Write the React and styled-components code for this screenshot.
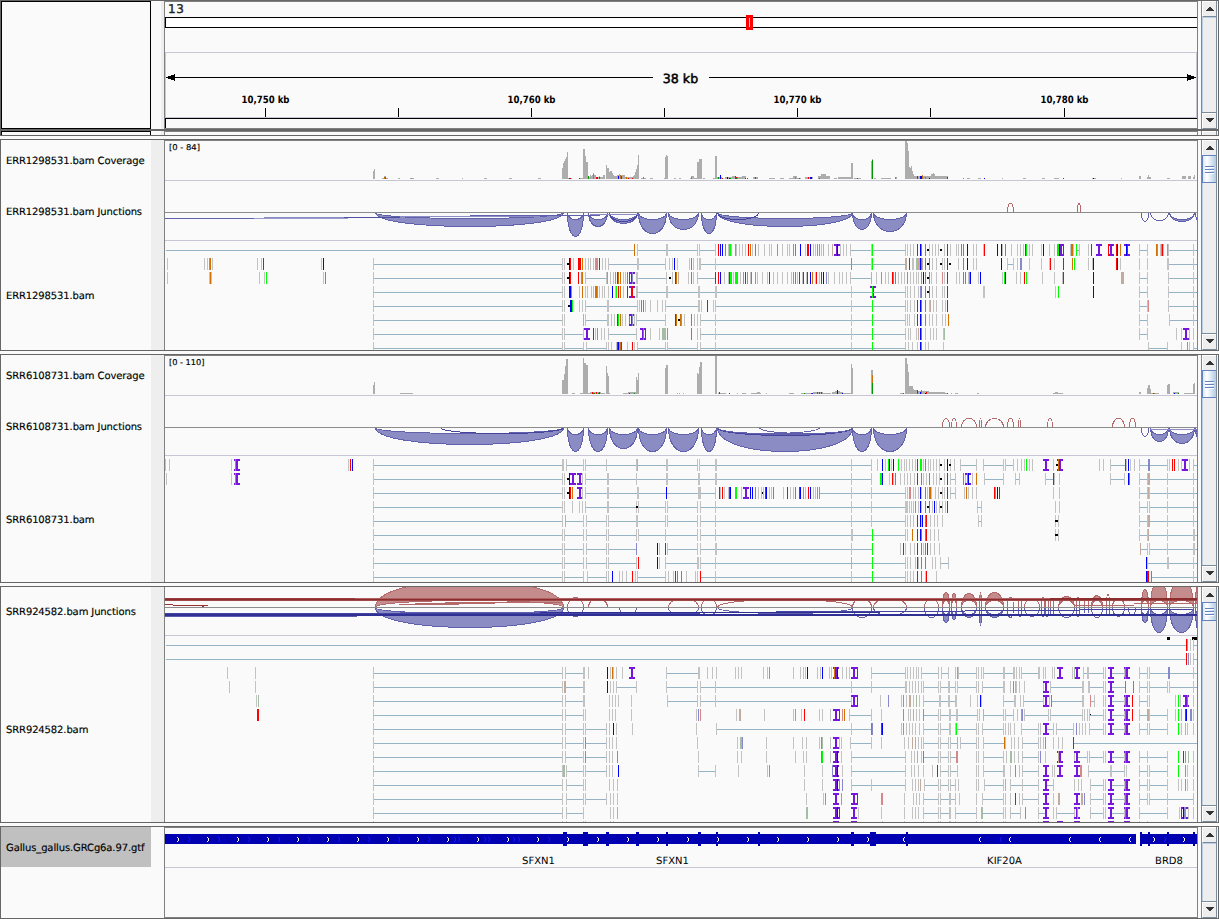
import React from 'react';
import styled, { createGlobalStyle } from 'styled-components';

const Global = createGlobalStyle`
  * { box-sizing: border-box; }
  html, body { margin: 0; padding: 0; background: #fafafa; overflow: hidden; }
  body { font-family: "DejaVu Sans", Verdana, sans-serif; font-size: 10px; color: #000; }
`;

const Window = styled.main`
  display: flex;
  flex-direction: column;
  width: 1219px;
  height: 919px;
  background: #fafafa;
`;

const HeaderPanel = styled.section`
  display: flex;
  height: 131px;
  border: 1px solid #666;
  border-bottom-width: 2px;
`;

const Stub = styled.div`
  display: flex;
  height: 5px;
  margin-bottom: 3px;
  border: 1px solid #666;
  border-top: 0;
`;

const Panel = styled.section`
  display: flex;
  height: ${(p) => p.$h}px;
  border: 1px solid #666;
  & + & { margin-top: 3px; }
`;

const Names = styled.div`
  display: flex;
  flex-direction: column;
  width: 150px;
  flex: none;
`;

const HeaderBox = styled.div`
  width: 150px;
  flex: none;
  border: 1px solid #000;
  ${(p) => p.$open && 'border-bottom: 0;'}
`;

const TrackName = styled.div`
  display: flex;
  align-items: center;
  height: ${(p) => p.$h}px;
  padding: 2px 0 0 5px;
  white-space: nowrap;
  letter-spacing: -0.12px;
  text-rendering: geometricPrecision;
  -webkit-text-stroke: 0.15px #000;
  background: ${(p) => (p.$selected ? '#c0c0c0' : 'transparent')};
`;

const Strip = styled.div`
  width: 13px;
  flex: none;
  border-left: ${(p) => (p.$narrow ? '10px solid #fafafa' : '0')};
  background: ${(p) => (p.$plain ? '#fafafa' : '#eee')};
`;

const Data = styled.div`
  display: flex;
  flex-direction: column;
  width: 1034px;
  flex: none;
  overflow: hidden;
  border: solid #808080;
  border-width: ${(p) => (p.$top ? 1 : 0)}px 1px ${(p) => (p.$bottom ? 1 : 0)}px 1px;
`;

const Canvas = styled.svg`
  display: block;
  flex: none;
  width: 1032px;
  height: ${(p) => p.$h}px;
  shape-rendering: crispEdges;
  text-rendering: geometricPrecision;
  font-family: "DejaVu Sans", Verdana, sans-serif;
`;

const Divider = styled.div`
  height: 1px;
  flex: none;
  background: #c6c6d4;
`;

const Scroll = styled.div`
  display: flex;
  flex-direction: column;
  width: 16px;
  flex: none;
  margin-left: 3px;
  border-left: 1px solid #7a8a99;
  border-right: 1px solid #7a8a99;
  background: #eee;
  overflow: hidden;
`;

const ScrollButton = styled.div`
  display: flex;
  align-items: center;
  justify-content: center;
  height: 16px;
  flex: none;
  padding-bottom: ${(p) => (p.$down ? 2 : 0)}px;
  border: 1px solid #fff;
  border-right: 0;
  border-bottom: 1px solid #7a8a99;
  box-shadow: ${(p) => (p.$down ? '0 -1px 0 #7a8a99' : 'none')};
  background: #eee;
`;

const ScrollTrack = styled.div`
  flex: 1;
  border-left: 1px solid #b8cfe5;
  border-top: ${(p) => (p.$bare ? '1px solid #b8cfe5' : '0')};
`;

const Thumb = styled.div`
  display: flex;
  flex-direction: column;
  justify-content: center;
  gap: 1px;
  height: ${(p) => p.$h}px;
  margin: -1px 0 0 -1px;
  padding: 1px 2px 0;
  border: 1px solid #6382bf;
  border-right: 0;
  background: linear-gradient(to right, #d9e6f3, #fff 30%, #b8cfe5 95%);
`;

const Grip = styled.i`
  height: 2px;
  border-top: 1px solid #6382bf;
  background: #fff;
`;

const COLORS = {
  '': '#c3c3c3',
  r: '#ff0000',
  b: '#0000ff',
  g: '#00ff00',
  o: '#d17105',
  l: '#d68888',
  v: '#8888cc',
  t: '#c2ab9c',
  s: '#a4bda4',
  G: '#009600',
};

/* Reads are positioned in thirds of a pixel from the last "@origin"; "-" joins two reads. */
function Reads({ rows, top }) {
  const out = [];
  rows.forEach((row, r) => {
    const y = top + r * 14;
    let origin = 0;
    let prev = null;
    let join = false;
    row.split(/\s+/).forEach((tok, i) => {
      const key = r + '-' + i;
      if (tok[0] === '@') { origin = Number(tok.slice(1)); return; }
      if (tok === '-') { join = true; return; }
      const m = /^([a-zA-Z]?)(\d+)(?:x(\d))?$/.exec(tok);
      if (!m) return;
      const x = Math.floor(origin + Number(m[2]) / 3);
      const w = Number(m[3] || 1);
      if (join && prev !== null) {
        out.push(<rect key={'j' + key} x={prev} y={y + 6} width={Math.max(0, x - prev)} height="1" fill="#94b4c6" />);
      }
      join = false;
      prev = x + w;
      if (m[1] === 'E') return;
      if (m[1] === 'I') {
        const c = Math.round(origin + Number(m[2]) / 3);
        out.push(<path key={key} fill="#7616dc" d={`M${c - 3} ${y}h6v2h-2v8h2v2h-6v-2h2v-8h-2z`} />);
      } else if (m[1] === 'k') {
        out.push(<rect key={key} x={x - 1} y={y + 5} width={w + 1} height="2" fill="#000" />);
      } else {
        out.push(<rect key={key} x={x} y={y} width={w} height="12" fill={COLORS[m[1]]} />);
      }
    });
  });
  return <g>{out}</g>;
}

function Coverage({ data, base }) {
  return (
    <g>
      {data.trim().split(/\s+/).map((tok, i) => {
        const m = /^([a-zA-Z]?)(\d+)(?:-(\d+))?:(\d+)$/.exec(tok);
        const x = Number(m[2]);
        const end = Number(m[3] || x);
        const h = Number(m[4]);
        return <rect key={i} x={x} y={base - h} width={end - x + 1} height={h} fill={m[1] ? COLORS[m[1]] : '#adadad'} />;
      })}
    </g>
  );
}

/* [start, end, inner depth, outer depth]; a missing outer depth gives a thin arc. */
function Arcs({ list, base, up }) {
  const s = up ? -1 : 1;
  const stroke = up ? '#b46a6a' : '#6060ac';
  const fill = up ? '#c48c8c' : '#8c8cc4';
  return (
    <g strokeWidth="1">
      {list.map(([a, b, inner, outer, dark], i) => {
        const y = base + 0.5;
        const c1 = y + (s * inner) / 0.75;
        const x1 = a + 0.5;
        const x2 = b + 0.5;
        if (!outer) {
          return <path key={i} fill="none" stroke={dark || stroke} d={`M${x1} ${y}C${x1} ${c1} ${x2} ${c1} ${x2} ${y}`} />;
        }
        const c2 = y + (s * outer) / 0.75;
        return <path key={i} fill={fill} stroke={stroke} d={`M${x1} ${y}C${x1} ${c1} ${x2} ${c1} ${x2} ${y}C${x2} ${c2} ${x1} ${c2} ${x1} ${y}z`} />;
      })}
    </g>
  );
}

function Bars({ list }) {
  return list.map(([x, y, w, h, c], i) => <rect key={i} x={x} y={y} width={w} height={h} fill={c} />);
}

function Arrow({ down }) {
  return (
    <svg width="8" height="4" viewBox="0 0 8 4" shapeRendering="crispEdges">
      <path fill="#333" d={down ? 'M0 0h8v1h-1v1h-1v1h-1v1h-2v-1h-1v-1h-1v-1h-1z' : 'M3 0h2v1h1v1h1v1h1v1h-8v-1h1v-1h1v-1h1z'} />
    </svg>
  );
}

function ScrollBar({ thumb }) {
  return (
    <Scroll>
      <ScrollButton><Arrow /></ScrollButton>
      <ScrollTrack $bare={!thumb}>
        {thumb && <Thumb $h={thumb}><Grip /><Grip /><Grip /></Thumb>}
      </ScrollTrack>
      <ScrollButton $down><Arrow down /></ScrollButton>
    </Scroll>
  );
}

function Track({ top, h, children }) {
  return <Canvas $h={h} viewBox={`165 ${top} 1032 ${h}`}>{children}</Canvas>;
}

const COV1 = `
373:8 374:10 382-387:1 384-385:3 o384:2 G385:2 398-399:1 410-413:1 o411:1 436-438:1 462:1 484-486:1 509-511:1 538-540:1
562:11 563:16 564:18 565:20 566:22 567:27 568-571:1 b569:1 r570:1 r579:1 580-582:1
583-584:30 585:23 586-587:17 588-604:2 590:4 591:3 592:4 593:6 594-595:4 599:3 603-604:4 G588:3 o593:5 r597:2 G599:2 r596:2
606:14 607-608:11 609:7 610-611:8 612:6 613:4 614-616:3 617-624:4 619:5 625-632:2 b618:3 o620:4 r621:3 o626:2 r628:1 r632:1
633:3 634:4 635:7 636:10 637:14 638:24 641-645:1 643:2 o643:2 650-652:1 664:1 665:22 666:24 667:23 674-675:1 679-680:1
690-696:1 691-693:3 o691:2 697-698:17 699-701:20 703-704:1 713-714:1 715-716:23 717-721:2 720:4 G718:2 b720:4 r722:1
725-741:2 732-735:3 b727:2 b729:1 G730:1 r735:3 r736:2 o737:2 G736:1 742-745:3 r745:1 G747:1 753-757:2 G755:2 769-774:1 780-783:1
789-800:1 793-796:3 o795:2 r799:1 805-812:2 r808:2 b810:2 b811:2 818-829:3 821-825:5 G819:1 834-836:1 838-850:2 
851-852:16 854-860:1 G857:1 871:18 872:20 G872:19 874-875:1 881-890:1 o895:2 896:2
905-906:38 907:36 908:28 909:12 910:11 911:13 912:8 913:5 914-926:3 927-947:3 931-934:5 933:6 922:4 r917:3 b920:3 b921:3 o922:4 o925:2 b929:1 r947:2
o963:1 967-969:1 978-980:1 b984:1 1002:1 1023-1025:1 1042-1044:1 1054-1058:1 r1063:1 1092-1095:1 b1093:1 1121:1
1139-1140:3 1147-1150:2 1148:4 1167-1169:1 1182-1185:3 1188-1190:3 1193:2 1194:4`;

const COV2 = `
373:9 374:12 400-412:1 562-563:14 564:20 565:28 566-567:35 572-574:1 580-582:1 583:36 584-585:31 586-587:29
588-604:1 590-600:2 r592:2 r593:1 r596:2 G594:1 G598:1 r599:2 606:28 607:21 608:18 609:1 623-627:1 628-635:2 r629:1 G634:1
636:17 637:14 638:21 665:26 666-667:29 677:1 679:1 683:1 697:21 698:20 699:27 700-701:32 715-716:38 718-725:1 r719:2
r729:1 737:1 742-745:1 751-760:1 757-759:2 766:1 789-793:1 801-812:1 G804:1 G811:1 b812:1 813-822:2 G817:2 G819:2 r821:2 823-830:1
832-842:2 835-839:3 b837:4 b842:1 843-850:1 851:30 852:26 871-872:24 o872:19 G872:11
900-903:1 G903:1 905-906:36 907:30 908:22 909-912:8 913:5 914-916:4 918-922:3 923-928:3 r917:4 o921:4 b920:2 r926:2 b925:1 929-944:2 945-947:1 r947:1
951:1 955-957:1 977-978:1 1053-1062:1 1055-1057:2 1139-1140:2 1147:6 1148-1149:9 1150:5 1151-1158:1 r1153:1 o1154:1
1167:9 1168-1169:10 1173-1178:2 b1174:1 G1178:1 1184-1192:1 1193:10 1194:11`;

const ROWS1 = [
  '@0 E495 - @540 o283 292 - 378 382 - 473 478 - 526 r535 b541 b547 o556 565 g568x2 574 g586 r589 590 598 606 r616 615 r625 o631 638 o646 655 673 688 695 g712 728 743 749 g760 o766 b781 796 r803x2 b811 820 826 g832 g838 844 s851 866 t877 I890 b892 902 910 919 931 - 993 g997 - 1095 @880 76 82 91 100 r112 b121 o124 o136 k144 148 157 166 175 k185 193 r202 211 230 236 o244 o250 b262 281 290 310 r313 b352 b364 367 o376 394 412 421 430 r436 g439 448 457 484 b490 508 523 I544 v532 g535 b538 r550 571 o574x2 580 g589 - 598 625 r634 I656 I693 r686 r710 b712 o720 I741 b738 778 - 803 o829 g832 841 g843 r846 850 l862 865 - 940 - E951',
  '@0 502 613 622 g628 o631 637 772 784 r790 964 b970 1120 - @540 68 73 k84 b88 r91 100 r115x3 o127 136 145 151 160 l167x3 r178 187 196 205 - 291 295 - 376 388 397 b403 412 448 o454 460 472 479x2 - 526 - v934 - 994 g997 - 1095 @880 t76x2 r88 97 100 s108x4 t115x2 b121 o124 t127 o136 k146 o148 157 169 k185 187 193 r202 k212 236 o250 b262 281 290 b364 382 - 400 412 v421x2 448 484 r511 508 523 r550 o577 g583 625 b640 637 r710 b712 720 778 803 862x2 - 940 - E951',
  '@0 502 628 o631 634 778 794 g799 970 o976 1120 - @540 68 73 k84 b88 r91 r115 g124 o127 136 - 199 l202 211 220 g226 r232 o235 o241 250 256 o262 r268 I277 v277 289 292 - 378 k390 397 r406 o409 t414 445 o454 460 472 - r526 r535 b541 553 565 r568 g571x2 580 g586x3 601 g610 r616 g622 631 o634 g646 652 667 682 r688 700 712 727 742 754 g760 o766 772 r778 787 r790 799 r803 b811 o817 826 r829 838 r844 b850 v859 865 883 898 907 919 931 - s995 1009 @880 g4 16 25 r37 o40 o46 55 64 73 v82 91 100 109 115 v124 b131 o136 k144 o148 154 169 l187 193 r202 230 239 o250 o256 265 v269 b272 295 b301 367 g373 b376 409 421 r433 g439 487 523 547 r550 b640 t725x3 778 - 803 865 - 940 - E951',
  '@0 1120 - @540 68 73 b88x2 g94 118 o127 136 142 154 160 o166x2 g173 178 187 193 205 b217 226 g229 o241 r234 250 r262 I277 r277 289 292 - 378x2 - 474x2 - 527x2 - 934 - I998 g998 - 1095 @880 76 82 91 103 115 v121x2 o124 o136 148 k146 o148 157 169 187 193 r202 310x2 526 g535 b640 778 - 803 865 - 940 - E951',
  '@0 1120 - @540 68 73 k88 b91x2 g96 118 127 136 - 201x2 - 291 298 o304 o310 316 331 352 367 376 - 474x2 484 r502 520 526 - 934 - g997 - 1095 @880 76 82 91 103 r112 b121 o124 o136 148 t151 160 169 187 196 r202 778 - 803 l805 865 - 940 - E951',
  '@0 1120 - @540 68 73 t129 136 - 201x2 214 223 r232 g236 o241 247 256 o268 I277 v277 283 289 - 376 r406 o409 k418 o421 g424 433 o454 463 472 481 - 526 - 934 - g997 - 1095 @880 76 82 88 103 r112 b121 o124 o136 148 157 169 187 196 o205 778 - 803 868 - 940 - E951',
  '@0 1120 - @540 68 73 - 130 I140 r160 166 g172 184 193 205 - 289 I308 o310 r316 331 358 s368x4 g382 o454 472 481 - 526 - 934 - g997 - 1095 @880 76 85 91 109 t115 b121 o124 136 151 160 169 190 s193 778 - 803 889 904 I917 928 940',
  '@0 1120 - @540 68 73 - 130 139 - 199 205 214 229 r232 b235 g238 o241 r244 262 r277 283 292 - 376 382 - 472 481 - 526 - 934 - g997 - 1095 @880 76 85 97 112 b121 o124 136 145 190 805 - 862 904 g922 928 940 - E951',
];

const ROWS2 = [
  '@150 46 58 244 I261 v256 595 r601 b607 670 - @540 68x2 79 - 130 136 - 199 - 290 t292 - 378x2 - 472 478 - 527x2 - 934 - 994 1012 @880 b7 17 g25 b28 b40 34 g55 64 73 79 88 97 106 r112 g121x2 130 o136 145 151 160 169 178 k184 193 b202 211 k212 223 241 - 290 311 - 370 376 - 400 412 424 433 g439 448 457 I497 520 I541 k533 o535 658 670 691 - r736 739 b745 751 763 778 - v805x2 - 862 868 r877 r883 895 904 I916 928 940 - E951',
  '@150 49 244 I261 v256 670 - @540 68 73 k84 b88 I99 I119 127 136 - 201x2 - 290 - 378x2 - 474x2 - 527x2 - 934 - 994 @880 g1x2 b7 28 r37 40 o46 61 73 82 91 103 r112 o124 130 139 o148 160 169 178 k184 193 r202 211 - 226 o250 256 I264 o262 b265 277 o289 313 - 370 406 - 418 497 - r520 523 538 691 - 733 b745 o748 778 - 803 t805x2 - 862 - 940 - E951',
  '@150 670 - @540 68 73 k84 b88 r91 o97 I119 127 136 - 201x2 - 292x2 - b379 - 474x2 481 - 526 r538 r547 541 553 565 r568 b571 g586x2 604 I619 b631 b637 o646 655 664 k671 670 r676 b679 688 694 o700 730 r742 751 760 o766 b781 r778 g790 796 r805 b811 820 826 g832 g838 - 934 - 994 - 1095 @880 76 82 l88x2 100 106 115 b121x2 124 o136 142 o148x2 154 166 175 k184 187 193 r202 211 - 226 253 o259 265 277 289 r343 g346 b352 r358 520 538 778 - 803 t805 808 - 862 - 940 - E951',
  '@150 670 - @540 68 73 97 118 127 136 - 201x2 - 290 k292 295 - 376 382 - 472 481 - 526 - 934 - 994 - 1095 @880 79x2 88 94 100 g106 115 b121 124 o136 k145 o148 157 b163 169 178 k185 187 196 r202 292 - 304 526 538 778 - 803 808 - 862 - 940 - E951',
  '@150 670 - @540 68 s76 - 130 139 - 199 205 - 290x2 - 376 382 - 472 481 - 526 - 934 - 994 - 1095 @880 76 82 91 100 r112 b121 124 b127 o136 r139 151 163 172 187 295 - 304 526 k529x3 535 778 - 803 t805x2 - 862 - 940 - E951',
  '@150 670 - @540 68 73 - 130 139 - 199 205 - 290 295 - 376 - 472 481 - 526 - 934x2 - g997 - 1095 @880 76 82 o97 r112 b121 o124 o136 r139 151 163 175 526 k529x3 535 778 - 803 t805 - 862 - 940x2 - E951',
  '@150 670 - @540 68 73 - 130 139 - 199 205 - v290 b352 358 r376 382 - 472 481 - 527x2 - 934 - g997 @880 61 r70 76 91 103 r112 o124 130 o136 r142 151 163 178 t781 - 803 808 - 862 - 940x2 - E951',
  '@150 670 - @540 68 73 - 130 139 - 199 205 - 290 r295 b352 358 376 - 472x2 481 - 526 - t934 - g997 - 1095 @880 76 82 91 r112 106 o124 115 o136 157 166 181 - 205 b799 802 - 862x2 - 940 - E951',
  '@150 670 - @540 68 73 - 130 141 - 199 205 b217 238 247 259 r277 286 292 - 376 385 400 r406 o412 o424 439 466 472 r481 - 526 - 934 - g997 - 1095 @880 76 82 91 100 r112 o124 136 r139 169 b799 r803x2 o814 - 940 - E951',
];

const ROWS3 = [
  '@165 E0 - @880 r919 l922 931 940 - E951',
  '@165 E0 - @880 r919 v924 931 940 - E951',
  '@140 262 346 700 - @540 68 76 - 130 133 145 b202 211 o217 220 229 247 I276 379 - 474x2 502 517 529 586 595 604 670 682 g688 760 781 790 796 b802 832 841 b847 868 874 I889 o883 b892 907 919 928 I942 r952 994 - @880 76 82 91 100 109 115 124 - 175 184 - 205 226 l232 235 - 289 295 304 310 - 370x2 - 400 403 409 418 424 - 475x2 490 496 517 523 I540 577 I591 s583 610 - 622x2 - 670 676 I693 - 733 I741 o736 778 - 803 808 - v865x2 - 940 - E951',
  '@140 268 346 700 - @540 68 t73x2 - 130 133 b202 211 220 229 - 289 379 - 472 481 - 526 - 934 - 994 - @880 76x2 88 97 106 115 124 130 - 175 181 - 205 208 - 226 232 - 289 295 307 - 370x2 391 v400 s406 409 418 433 490 I499 511 - 608x2 625 628 - 670 676 I693 - o736 o760 778 - 803 808 - 862 868 - 940 - E951',
  '@140 349 s355 700 - @540 68 76 - 130 133 208 217 226 235 274 382 - 472 481 - 526 - 934 I942 r952 1021 v1045 @880 64 g70 79 t88x2 100 s109 118 130 - 178x2 - 205 208 - 227x2 271 292 b301 304 370 - 403x2 421 430 - 490 I498 508 o514 - 608x2 l631 - 643 670 676 I693 - 733 I741 o736 r757 778 - 803 808 886 g895 901 I917 o922 940',
  '@140 r352x2 700 - @540 68 76 - 130 136 208 217 226 274 469 v475 l481 589 t598x2 673 760 l766 784 r793 838 847 871 I888 r898 l907 o913 928 - 994 1024 @880 4 g70 85 91 t100 109 118 g130 - 175 181 - 208x2 - 229x2 - 292 298 s310 - 370 376 - 400 412 l424 v427 433 - 505 511 - 606 613 622 k632 628 - 670 676 I693 - 733 I741 o736 r757 778 - t803x2 808 - 862 886 g895 t904 r916 b919 v931x2 940',
  '@140 700 - @540 68 76 - 130 136 - 199 208 b220 229 277 469 529 - 934 - o994 v997 r1024 b1027 @880 64 g70 79 88 97 106 118 130 - 175 181 - 208x2 226 g229 - 289 295 307 - 370 376 385 391 403 424 - 475 481 I498 - 520 529 - 580 v589 598 607 616 628 - 670 676 I693 - 733 I741 o736 778 - 803 808 - 862 g895 904 s916 922 940',
  '@140 700 - @540 68 76 - 130 v136 - 199 208 217 229 472 592 s601x2 v607 679 760 787 799 838 v844 s847 871 I888 898 904 931 - 994 1024 @880 4 73 85 t97 t106 115 124 130 - 175 181 - 205 211 - t232 241 - 289 295 310 - o373 376 394 403 415 427 - 475 481 490 v496 520 535 547 r580 - E951',
  '@140 700 - @540 68 76 - 130 v136 - 199 208 217 v232 475 592 604 679 766 790 799 o844 g847 871 I889 b892 904 934 - @880 76 94 103 t112 124 o129 - 175 181 - 205 211 - l229x2 289 295 310 - 370 379 s391x2 403 415 427 - 475 v481 496 I540 t535 583 I591 - 622 628 - 670 676 I693 - 733 I742 o736 778 - 803 - 862 g895 r910 g916 s925 940',
  '@140 700 - @540 68 s71x2 79 - 130 136 - 199 208 217 b235 475 - 526 595 682 g688 793 847 v877 I888 b892 907 934 - @880 76 94 103 115 130 157 r172 181 - 205 211 - 232 289 295 310 - 370x2 391 v406 418 427 - 475 I498 517 523 I540 I591 l601x2 625 - 690x2 - 733 739 778 - 803 808 - 862 g895 g916 922 940',
  '@140 700 - @540 68 79 - 130 136 208 220 232 793 847 I888 b892 v898 v907 934 - 994 - @880 76 97 106 115 t121 133 - 175 181 - 205 211 - 226 235 289 295 313 - 370 t376 391 - 427 - 475 I498 - 520 583 595 604 631 - 670 676 I693 - 733 I741 o736 778 - 803 808 - 862 895 904 g916 922 940',
  '@140 700 - @540 68 79 - 130 136 - 199 211 220 232 799 850 g856 I889 l904 I942 r952 l1025x2 @880 73 100 109 118 130 - 175 181 - 208x2 - 226 238 289 307 - 370 376 391 r406 418 427 - 475 I498 520 t535x2 I591 t605x2 v613 631 - 670 676 I693 - 733 I741 o736 778 - 803 808 - 862 - 940',
  '@140 700 - @540 68 79 - 130 211 220 t232 s800x2 I889 b892 r898 I942 955 1024 @880 73 97 106 115 130 - 175 181 - 208x2 226 - 289 s305x2 - 370 376 391 - 421 v436 475 - I498 520 529 - 583 I591 g592 631 - 670 676 I693 - 733 I741 o736 778 - 862 898 r904 I915 b911 v913 g916 925 940',
  '@140 700 @540 68 79 130 136 211 220 I889 I942 1027 @880 73 130 175 181 208x2 226 289 307 370 376 475 I498 I540 I591 I693 I741 778 803',
];

const DARK_BLUE = '#44449c';
const DOWN1 = [
  [375, 563, 6, 14], [567, 583, 7, 24], [588, 607, 7, 14], [609, 637, 7, 11], [609, 637, 9, 0, DARK_BLUE], [638, 666, 7, 21],
  [668, 698, 7, 17], [701, 716, 7, 21], [717, 852, 6, 14], [717, 758, 7, 0, DARK_BLUE], [852, 871, 7, 17], [873, 906, 7, 19],
  [1141, 1148, 9], [1150, 1168, 8], [1169, 1194, 7, 9], [1195, 1204, 9],
];
const DOWN2 = [
  [375, 563, 6, 17], [440, 563, 6, 0, DARK_BLUE], [567, 583, 7, 24], [588, 607, 7, 24], [609, 637, 7, 21], [638, 666, 7, 24],
  [668, 698, 7, 24], [701, 716, 7, 24], [717, 852, 7, 24], [717, 852, 8, 0, DARK_BLUE], [717, 819, 6], [759, 852, 6], [852, 871, 7, 24], [873, 906, 7, 24],
  [1141, 1148, 9], [1150, 1168, 7, 14], [1169, 1194, 7, 16], [1195, 1206, 7, 14],
];
const UP2 = [[942, 949, 9], [951, 956, 9], [961, 976, 9], [979, 981, 9], [985, 1003, 9], [1007, 1013, 9], [1018, 1020, 9], [1047, 1052, 9], [1112, 1124, 9], [1129, 1135, 9]];
const UP3 = [
  [375, 563, 7, 27], [567, 583, 10], [588, 607, 9], [668, 698, 9], [701, 716, 9], [717, 852, 8], [852, 871, 9], [873, 906, 9],
  [924, 938, 9], [942, 949, 7, 15], [951, 956, 7, 14], [961, 976, 7, 14], [979, 981, 7, 15], [985, 1003, 7, 15], [1007, 1013, 10],
  [1018, 1021, 9], [1024, 1039, 9], [1041, 1044, 10], [1045, 1048, 9], [1050, 1053, 9], [1058, 1074, 7, 11], [1076, 1079, 10],
  [1084, 1088, 9], [1091, 1102, 7, 12], [1106, 1109, 13], [1112, 1124, 9], [1141, 1148, 7, 18], [1150, 1167, 7, 27], [1169, 1193, 7, 29], [1195, 1204, 7, 29],
];
const DOWN3 = [
  [375, 563, 6, 20], [567, 583, 9], [619, 636, 8], [668, 698, 8], [701, 716, 8], [717, 852, 6], [852, 871, 10], [873, 906, 8],
  [924, 938, 10], [942, 949, 7, 15], [951, 956, 7, 12], [961, 976, 7, 10], [979, 981, 7, 18], [985, 1003, 7, 10], [1007, 1013, 10],
  [1018, 1021, 9], [1024, 1039, 9], [1041, 1044, 9], [1045, 1048, 9], [1050, 1053, 8], [1058, 1074, 10], [1076, 1079, 9],
  [1084, 1088, 8], [1091, 1102, 10], [1106, 1109, 8], [1112, 1124, 9], [1128, 1135, 8], [1141, 1148, 7, 15], [1150, 1167, 7, 25], [1169, 1193, 7, 25], [1195, 1204, 7, 25],
];

const LONG1 = [[165, 218, 90, 1, '#6060ac'], [254, 218, 94, 1, '#9a9acb'], [264, 217, 110, 1, '#8c8cc4'], [344, 217, 56, 1, '#5050a0'], [400, 216, 140, 1, '#8c8cc4'], [470, 215, 130, 1, '#6060ac'], [590, 214, 48, 1, '#8c8cc4']];
const BANDS3 = [
  [165, 598, 190, 1, '#9c3c3c'], [355, 598, 842, 1, '#b06060'], [165, 599, 1032, 1, '#8c2c2c'], [165, 600, 1032, 1, '#a04848'],
  [1050, 598, 147, 1, '#8c2c2c'], [1074, 605, 60, 1, '#b46a6a'], [1134, 603, 63, 1, '#b46a6a'],
  [399, 604, 60, 1, '#b46a6a'], [415, 603, 80, 1, '#b46a6a'], [445, 602, 118, 1, '#b46a6a'],
  [165, 604, 8, 1, '#963232'], [173, 605, 35, 1, '#963232'], [202, 606, 2, 1, '#963232'],
  [165, 613, 535, 1, '#4444a4'], [165, 614, 1032, 1, '#303094'], [165, 615, 1032, 1, '#303094'], [165, 616, 192, 1, '#5c5cac'],
  [540, 612, 340, 1, '#303094'], [776, 611, 189, 1, '#4444a4'], [965, 610, 115, 1, '#4444a4'],
  [1080, 609, 112, 1, '#4444a4'], [400, 612, 140, 1, '#5c5cac'],
];

const EXONS = [[563, 4], [583, 5], [606, 3], [636, 3], [666, 2], [698, 3], [716, 2], [758, 2], [851, 3], [870, 6], [906, 2], [1140, 2], [1148, 2], [1167, 2], [1193, 2]];
const CHEVRONS = [
  ...Array.from({ length: 24 }, (_, i) => [178 + i * 30, 1, '#fff']),
  ...Array.from({ length: 13 }, (_, i) => [189 + i * 30, 1, '#1414ff']),
  [455, 1, '#1414ff'], [485, 1, '#1414ff'], [514, 1, '#1414ff'],
  ...[904, 980, 1010, 1070, 1100, 1130].map((x) => [x, -1, '#fff']),
  [1001, -1, '#1414ff'], [1154, 1, '#fff'], [1165, 1, '#1414ff'], [1184, 1, '#fff'],
];

function Chevron({ x, dir, color }) {
  const xs = dir > 0 ? [0, 1, 1, 1, 0] : [1, 0, 0, 0, 1];
  return <g fill={color}>{xs.map((d, i) => <rect key={i} x={x - 1 + d} y={837 + i} width="1" height="1" />)}</g>;
}

function Ruler() {
  const labels = [[265, '10,750 kb'], [531, '10,760 kb'], [797, '10,770 kb'], [1064, '10,780 kb']];
  return (
    <Track top={2} h={127}>
      <text x="168" y="13" fontSize="12" letterSpacing="0.6" fill="#222" stroke="#222" strokeWidth="0.35">13</text>
      <rect x="165" y="17" width="1032" height="11" fill="#000" />
      <rect x="166" y="18" width="1031" height="9" fill="#fff" />
      <rect x="746" y="15" width="7" height="15" fill="#f00" />
      <rect x="749" y="18" width="1" height="9" fill="#fbb" />
      <rect x="165" y="52" width="1032" height="1" fill="#c6c6d4" />
      <rect x="165" y="52" width="1" height="66" fill="#c6c6d4" />
      <rect x="1196" y="52" width="1" height="66" fill="#c6c6d4" />
      <rect x="165" y="117" width="1032" height="1" fill="#c6c6d4" />
      <path fill="#000" d="M166 77h487v1H166zM709 77h487v1H709z" />
      <path fill="#000" d="M167 77l8-3v7l-8-3zM1195 77l-8-3v7l8-3z" />
      <text x="680.5" y="83" fontSize="12.6" stroke="#000" strokeWidth="0.5" textAnchor="middle">38 kb</text>
      {labels.map(([x, t]) => <text key={t} x={x + 0.5} y="103" fontSize="10" fontWeight="700" textAnchor="middle" textLength="48" lengthAdjust="spacingAndGlyphs">{t}</text>)}
      {[265, 398, 531, 664, 797, 930, 1064].map((x) => <rect key={x} x={x} y="108" width="1" height="9" fill="#000" />)}
      <rect x="165" y="118" width="1032" height="1" fill="#000" />
      <rect x="165" y="118" width="1" height="10" fill="#000" />
      <rect x="165" y="128" width="1032" height="1" fill="#808080" />
    </Track>
  );
}

function CoverageTrack({ top, range, width, data }) {
  return (
    <Track top={top} h={39}>
      <text x="169" y={top + 9} fontSize="8" textLength={width} lengthAdjust="spacingAndGlyphs" stroke="#000" strokeWidth="0.15">{range}</text>
      <Coverage data={data} base={top + 38} />
    </Track>
  );
}

function Baseline({ y }) {
  return <rect x="165" y={y} width="1032" height="1" fill="#8c8c8c" />;
}

export default function App() {
  return (
    <>
      <Global />
      <Window>
        <HeaderPanel>
          <HeaderBox />
          <Strip $narrow />
          <Data $top><Ruler /></Data>
          <ScrollBar />
        </HeaderPanel>
        <Stub>
          <HeaderBox $open />
          <Strip $narrow />
          <Data $top />
          <ScrollBar />
        </Stub>

        <Panel $h={212}>
          <Names>
            <TrackName $h={41}>ERR1298531.bam Coverage</TrackName>
            <TrackName $h={60}>ERR1298531.bam Junctions</TrackName>
            <TrackName $h={109}>ERR1298531.bam</TrackName>
          </Names>
          <Strip />
          <Data $top>
            <CoverageTrack top={141} range="[0 - 84]" width={31} data={COV1} />
            <Divider />
            <Track top={181} h={59}>
              <Arcs list={[[1007, 1013, 9], [1077, 1080, 9]]} base={212} up />
              <Arcs list={DOWN1} base={212} />
              <Bars list={LONG1} />
              <Baseline y={212} />
            </Track>
            <Divider />
            <Track top={241} h={109}><Reads rows={ROWS1} top={244} /></Track>
          </Data>
          <ScrollBar thumb={28} />
        </Panel>

        <Panel $h={229}>
          <Names>
            <TrackName $h={41}>SRR6108731.bam Coverage</TrackName>
            <TrackName $h={60}>SRR6108731.bam Junctions</TrackName>
            <TrackName $h={126}>SRR6108731.bam</TrackName>
          </Names>
          <Strip />
          <Data $top>
            <CoverageTrack top={356} range="[0 - 110]" width={35.5} data={COV2} />
            <Divider />
            <Track top={396} h={59}>
              <Arcs list={UP2} base={427} up />
              <Arcs list={DOWN2} base={427} />
              <Bars list={[[1150, 429, 47, 1, '#8c8cc4']]} />
              <Baseline y={427} />
            </Track>
            <Divider />
            <Track top={456} h={126}><Reads rows={ROWS2} top={459} /></Track>
          </Data>
          <ScrollBar thumb={28} />
        </Panel>

        <Panel $h={237}>
          <Names>
            <TrackName $h={49}>SRR924582.bam Junctions</TrackName>
            <TrackName $h={186}>SRR924582.bam</TrackName>
          </Names>
          <Strip />
          <Data>
            <Track top={587} h={48}>
              <Arcs list={UP3} base={607} up />
              <Arcs list={DOWN3} base={607} />
              <Bars list={BANDS3} />
              <Baseline y={607} />
            </Track>
            <Divider />
            <Track top={636} h={186}>
              <Bars list={[[1167, 637, 3, 3, '#000'], [1192, 637, 5, 3, '#000']]} />
              <Reads rows={ROWS3} top={639} />
            </Track>
          </Data>
          <ScrollBar thumb={19} />
        </Panel>

        <Panel $h={93}>
          <Names>
            <TrackName $h={40} $selected>Gallus_gallus.GRCg6a.97.gtf</TrackName>
          </Names>
          <Strip $plain />
          <Data $top $bottom>
            <Track top={828} h={39}>
              <rect x="165" y="834" width="971" height="10" fill="#0000b2" />
              <rect x="1140" y="834" width="57" height="10" fill="#0000b2" />
              {EXONS.map(([x, w]) => <rect key={x} x={x} y="832" width={w} height="14" fill="#0000b2" />)}
              {CHEVRONS.map(([x, dir, color], i) => <Chevron key={i} x={x} dir={dir} color={color} />)}
              <g fontSize="10" textAnchor="middle">
                <text x="538.5" y="864">SFXN1</text>
                <text x="672.5" y="864">SFXN1</text>
                <text x="1004.5" y="864">KIF20A</text>
                <text x="1169" y="864">BRD8</text>
              </g>
            </Track>
            <Divider />
          </Data>
          <ScrollBar />
        </Panel>
      </Window>
    </>
  );
}
